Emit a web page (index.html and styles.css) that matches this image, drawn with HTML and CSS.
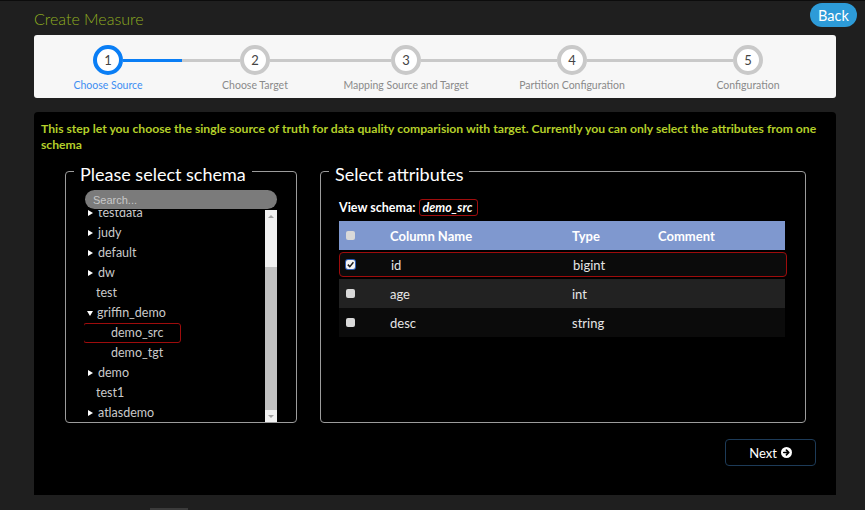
FILE: index.html
```html
<!DOCTYPE html>
<html>
<head>
<meta charset="utf-8">
<link rel="stylesheet" href="styles.css">
</head>
<body>
<header class="topbar">
  <h1 class="title">Create Measure</h1>
  <button class="back">Back</button>
</header>

<nav class="steps">
  <div class="step active">
    <div class="track"><span class="ln ln-none"></span><span class="circle">1</span><span class="ln ln-blue"></span></div>
    <div class="label">Choose Source</div>
  </div>
  <div class="step">
    <div class="track"><span class="ln"></span><span class="circle">2</span><span class="ln"></span></div>
    <div class="label">Choose Target</div>
  </div>
  <div class="step">
    <div class="track"><span class="ln"></span><span class="circle">3</span><span class="ln"></span></div>
    <div class="label">Mapping Source and Target</div>
  </div>
  <div class="step">
    <div class="track"><span class="ln"></span><span class="circle">4</span><span class="ln"></span></div>
    <div class="label">Partition Configuration</div>
  </div>
  <div class="step">
    <div class="track"><span class="ln"></span><span class="circle">5</span><span class="ln ln-none"></span></div>
    <div class="label">Configuration</div>
  </div>
</nav>

<main class="panel">
  <p class="intro">This step let you choose the single source of truth for data quality comparision with target. Currently you can only select the attributes from one schema</p>

  <div class="cols">
    <fieldset class="box box-schema">
      <legend>Please select schema</legend>
      <input class="search" type="text" placeholder="Search...">
      <div class="tree-wrap">
        <div class="tree-view">
          <ul class="tree">
            <li class="node caret">testdata</li>
            <li class="node caret">judy</li>
            <li class="node caret">default</li>
            <li class="node caret">dw</li>
            <li class="node leaf">test</li>
            <li class="node caret open">griffin_demo</li>
            <li class="node child selected">demo_src</li>
            <li class="node child">demo_tgt</li>
            <li class="node caret">demo</li>
            <li class="node leaf">test1</li>
            <li class="node caret">atlasdemo</li>
          </ul>
        </div>
        <div class="sbar">
          <span class="sbar-btn up"></span>
          <span class="sbar-track"><span class="sbar-thumb"></span></span>
          <span class="sbar-btn down"></span>
        </div>
      </div>
    </fieldset>

    <fieldset class="box box-attr">
      <legend>Select attributes</legend>
      <div class="attr-body">
        <div class="view-schema"><span class="vs-label">View schema:</span><span class="vs-name">demo_src</span></div>
        <div class="grid">
          <div class="row head">
            <span class="cell"><span class="cb"></span></span>
            <span class="cell">Column Name</span>
            <span class="cell">Type</span>
            <span class="cell">Comment</span>
          </div>
          <div class="row dark picked">
            <span class="cell"><span class="cb checked"><svg viewBox="0 0 9 9" width="9" height="9"><path d="M1.8 4.6 L3.8 6.6 L7.4 2.2" fill="none" stroke="#1b1b1b" stroke-width="1.5"/></svg></span></span>
            <span class="cell">id</span>
            <span class="cell">bigint</span>
            <span class="cell"></span>
          </div>
          <div class="row light">
            <span class="cell"><span class="cb"></span></span>
            <span class="cell">age</span>
            <span class="cell">int</span>
            <span class="cell"></span>
          </div>
          <div class="row dark">
            <span class="cell"><span class="cb"></span></span>
            <span class="cell">desc</span>
            <span class="cell">string</span>
            <span class="cell"></span>
          </div>
        </div>
      </div>
    </fieldset>
  </div>

  <div class="actions">
    <button class="next">Next <svg class="next-icon" viewBox="0 0 12 12" width="11" height="11"><circle cx="6" cy="6" r="6" fill="#fff"/><path d="M3 6 H8.2 M5.9 3.4 L8.5 6 L5.9 8.6" fill="none" stroke="#000" stroke-width="1.8" stroke-linecap="round" stroke-linejoin="round"/></svg></button>
  </div>
</main>
<div class="page-scroll"></div>
</body>
</html>
```

FILE: styles.css
```css
* { box-sizing: border-box; }

html, body {
  margin: 0;
  padding: 0;
}

body {
  background: #1f1f1f;
  font-family: Lato, "Open Sans", "Liberation Sans", sans-serif;
  color: #fff;
  width: 865px;
  height: 510px;
  overflow: hidden;
  border-top: 1px solid #0c0c0c;
}

.topbar {
  display: flex;
  justify-content: space-between;
  align-items: flex-start;
  height: 34px;
  padding: 0 8px 0 34px;
}

.title {
  margin: 7px 0 0;
  font-size: 16px;
  font-weight: 300;
  line-height: 22px;
  color: #8fae20;
}

.back {
  margin-top: 2px;
  width: 47px;
  height: 24px;
  border: none;
  border-radius: 12px;
  background: #2d9bd8;
  color: #fff;
  font-family: inherit;
  font-size: 14.5px;
  padding: 0;
}

.steps {
  margin: 0 29px 0 34px;
  height: 63px;
  background: #f7f7f7;
  border-radius: 3px;
  display: grid;
  grid-template-columns: 148px 146px 156px 176px 176px;
}

.step {
  padding-top: 10px;
  display: flex;
  flex-direction: column;
  align-items: stretch;
}

.track {
  display: flex;
  align-items: center;
  height: 30px;
}

.ln {
  flex: 1;
  height: 3px;
  background: #c9c9c9;
}

.ln-none { background: transparent; }
.ln-blue { background: #0a7ef5; }

.circle {
  width: 30px;
  height: 30px;
  border-radius: 50%;
  border: 4px solid #c9c9c9;
  background: #fff;
  display: flex;
  align-items: center;
  justify-content: center;
  font-size: 13px;
  color: #444;
  flex: none;
}

.step.active .circle { border-color: #0a7ef5; }

.label {
  margin-top: 3px;
  text-align: center;
  font-size: 10.5px;
  line-height: 14px;
  color: #8a8a8a;
  white-space: nowrap;
}

.step.active .label { color: #3d8ef2; }

.panel {
  margin: 14px 29px 0 34px;
  height: 383px;
  background: #000;
  border-radius: 4px 4px 0 0;
  padding: 0 30px 0 31px;
}

.intro {
  margin: 0 -24px 0 -24px;
  padding-top: 9px;
  font-size: 12.2px;
  line-height: 16px;
  font-weight: 700;
  color: #b4cf2a;
}

.cols {
  margin-top: 4px;
  display: flex;
  gap: 23px;
}

.box {
  margin: 0;
  padding: 0;
  border: 1px solid #9c9c9c;
  border-radius: 4px;
  min-width: 0;
  height: 266px;
}

.box legend {
  margin-left: 8px;
  padding: 6px 6px 0;
  font-size: 18px;
  line-height: 22px;
  color: #fff;
}

.box-schema { width: 232px; }
.box-attr { width: 486px; }

.search {
  display: block;
  margin: 5px 0 0 19px;
  width: 192px;
  height: 19px;
  border: none;
  border-radius: 10px;
  background: #7b7b7b;
  padding: 0 8px;
  font-family: "Liberation Sans", Arial, sans-serif;
  font-size: 11px;
  color: #ddd;
}

.search::placeholder { color: #c8c8c8; }

.tree-wrap {
  margin: 1px 0 0 18px;
  width: 193px;
  height: 212px;
  display: flex;
}

.tree-view {
  flex: 1;
  overflow: hidden;
}

.tree {
  list-style: none;
  margin: -7px 0 0;
  padding: 0;
}

.node {
  height: 20px;
  line-height: 20px;
  font-size: 12.5px;
  color: #cacaca;
  white-space: nowrap;
}

.node.caret { padding-left: 4px; }
.node.caret::before {
  content: "";
  display: inline-block;
  width: 0;
  height: 0;
  border-left: 5px solid #fff;
  border-top: 3px solid transparent;
  border-bottom: 3px solid transparent;
  margin-right: 5px;
  vertical-align: 1px;
}
.node.caret.open::before {
  border-top: 5px solid #fff;
  border-left: 3px solid transparent;
  border-right: 3px solid transparent;
  border-bottom: none;
  margin-right: 4px;
  margin-left: -1px;
}

.node.leaf { padding-left: 12px; }
.node.child { padding-left: 27px; }

.node.selected {
  margin-left: -1px;
  width: 98px;
  border: 1px solid #9e0c0c;
  border-radius: 3px;
  line-height: 18px;
  padding-left: 27px;
}

.sbar {
  width: 12px;
  display: flex;
  flex-direction: column;
  background: #f1f1f1;
}

.sbar-btn {
  height: 12px;
  display: flex;
  align-items: center;
  justify-content: center;
}

.sbar-btn.up::after {
  content: "";
  border-bottom: 3px solid #a3a3a3;
  border-left: 3px solid transparent;
  border-right: 3px solid transparent;
}

.sbar-btn.down::after {
  content: "";
  border-top: 3px solid #a3a3a3;
  border-left: 3px solid transparent;
  border-right: 3px solid transparent;
}

.sbar-track {
  flex: 1;
  display: flex;
  flex-direction: column;
  padding-top: 45px;
}

.sbar-thumb {
  flex: 1;
  background: #c1c1c1;
}

.attr-body { padding: 0 19px 0 18px; }

.view-schema {
  margin-top: 13px;
  height: 18px;
  display: flex;
  align-items: center;
  font-size: 12.5px;
  font-weight: 700;
  color: #fff;
}

.vs-label { margin-right: 3px; }

.vs-name {
  border: 1px solid #a00d0d;
  border-radius: 3px;
  padding: 0 5px 0 3px;
  height: 17px;
  line-height: 15px;
  font-style: italic;
}

.grid {
  margin-top: 5px;
  width: 446px;
}

.row {
  display: grid;
  grid-template-columns: 41px 182px 86px 1fr;
  align-items: center;
  height: 29px;
  font-size: 13px;
  color: #e6e6e6;
}

.row .cell { padding-left: 10px; }
.row .cell:first-child { padding-left: 7px; display: flex; }

.row.head {
  background: #7f98cf;
  color: #fff;
  font-weight: 700;
}

.row.dark { background: #0b0b0b; }
.row.light { background: #222; }

.row.picked {
  height: 25px;
  margin: 2px -2px 2px 0;
  border: 1px solid #9e0c0c;
  border-radius: 4px;
}

.row.picked .cell:first-child { padding-left: 6px; }

.cb {
  width: 9px;
  height: 9px;
  border-radius: 2px;
  background: #d9d9d9;
  display: block;
}

.cb.checked {
  background: #f4f4f4;
  box-shadow: 0 0 0 1px #2f5fb5;
  display: flex;
}

.actions {
  display: flex;
  justify-content: flex-end;
  margin: 16px -10px 0 0;
}

.next {
  width: 91px;
  height: 27px;
  border: 1px solid #1d3b58;
  border-radius: 4px;
  background: #000;
  color: #fff;
  font-family: inherit;
  font-size: 13px;
  display: flex;
  align-items: center;
  justify-content: center;
  gap: 4px;
  padding: 0;
}

.next-icon { display: block; }

.page-scroll {
  margin: 13px 0 0 150px;
  width: 38px;
  height: 2px;
  background: #3b3b3b;
}
```
